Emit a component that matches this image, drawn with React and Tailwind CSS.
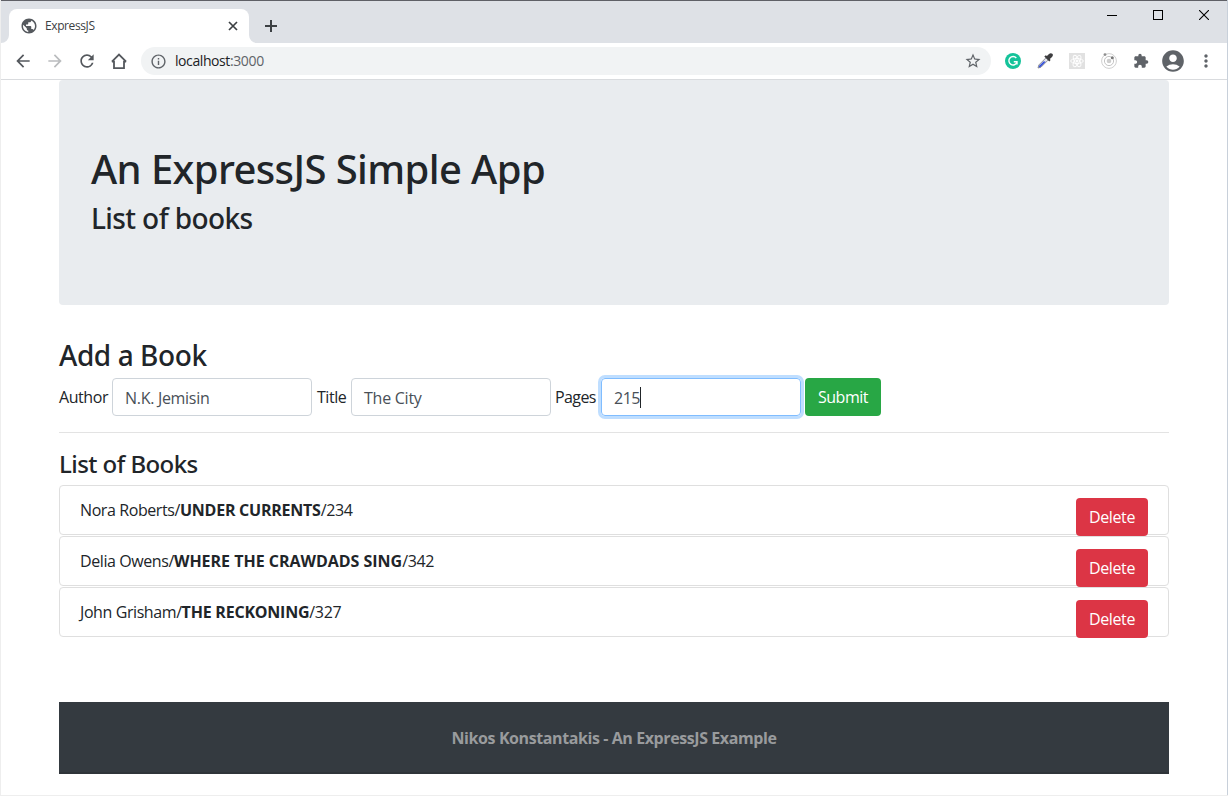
import {
  MdArrowBack,
  MdArrowForward,
  MdRefresh,
  MdInfoOutline,
  MdStarBorder,
  MdExtension,
  MdAccountCircle,
  MdMoreVert,
  MdPublic,
} from "react-icons/md";

const books = [
  { author: "Nora Roberts/", title: "UNDER CURRENTS", pages: "/234", t: "tracking-[-0.24px]" },
  { author: "Delia Owens/", title: "WHERE THE CRAWDADS SING", pages: "/342", t: "tracking-[-0.02px]" },
  { author: "John Grisham/", title: "THE RECKONING", pages: "/327", t: "tracking-[-0.22px]" },
];

function Slot({ children }) {
  return <div className="flex h-8 w-8 shrink-0 items-center justify-center">{children}</div>;
}

function TabStrip() {
  return (
    <div className="flex h-[43px] items-end border-t border-[#5f6066] bg-[#dee1e6]">
      <svg width="8" height="8" viewBox="0 0 8 8" className="shrink-0">
        <path d="M8 0v8H0a8 8 0 0 0 8-8z" fill="#fff" />
      </svg>
      <div className="flex h-[34px] w-[240px] shrink-0 items-center rounded-t-lg bg-white pl-[11px] pr-2">
        <MdPublic size={18} color="#55595e" className="shrink-0" />
        <span className="ml-[7px] flex-1 text-xs tracking-[-0.4px] text-[#3c4043]">ExpressJS</span>
        <div className="flex h-4 w-4 items-center justify-center">
          <svg width="10" height="10" viewBox="0 0 10 10" stroke="#3c4043" strokeWidth="1.7">
            <path d="M1 1l8 8M9 1l-8 8" />
          </svg>
        </div>
      </div>
      <svg width="8" height="8" viewBox="0 0 8 8" className="shrink-0">
        <path d="M0 0v8h8a8 8 0 0 1-8-8z" fill="#fff" />
      </svg>
      <div className="ml-1 flex h-[34px] w-5 items-center justify-center">
        <svg width="12" height="12" viewBox="0 0 12 12" stroke="#3c4043" strokeWidth="2">
          <path d="M6 0v12M0 6h12" />
        </svg>
      </div>
      <div className="ml-auto flex h-full items-start pt-[9px]">
        <svg width="10" height="10" viewBox="0 0 10 10" className="mr-[36px]">
          <path d="M0 5.5h10" stroke="#000" />
        </svg>
        <svg width="10" height="10" viewBox="0 0 10 10" className="mr-[36px]">
          <rect x="0.5" y="0.5" width="9" height="9" fill="none" stroke="#000" />
        </svg>
        <svg width="10" height="10" viewBox="0 0 10 10" className="mr-[18px]">
          <path d="M0 0l10 10M10 0L0 10" stroke="#000" strokeWidth="1.1" />
        </svg>
      </div>
    </div>
  );
}

function Toolbar() {
  return (
    <div className="flex h-[37px] items-center border-b border-[#d9dbde] bg-white pl-[6px] text-[#5f6368]">
      <Slot><MdArrowBack size={20} color="#54585d" /></Slot>
      <Slot><MdArrowForward size={20} color="#babcbe" /></Slot>
      <Slot><MdRefresh size={20} color="#54585d" /></Slot>
      <Slot>
        <svg width="16" height="16" viewBox="0 0 16 16" fill="none" stroke="#54585d" strokeWidth="1.8">
          <path d="M0.900 8.600L8 1.500l7.100 7.100M0.900 8.600H3v6.500h10V8.600h2.100" />
        </svg>
      </Slot>
      <div className="ml-[6px] flex h-7 w-[850px] shrink-0 items-center rounded-full bg-[#f1f3f4] pl-[9px] pr-[9px]">
        <MdInfoOutline size={17} />
        <span className="ml-2 text-sm leading-5 text-[#202124]">
          <span className="tracking-[-0.42px]">localhost</span>
          <span className="tracking-[-0.36px] text-[#5f6368]">:3000</span>
        </span>
        <MdStarBorder size={18} className="ml-auto" />
      </div>
      <div className="ml-[6px] flex">
        <Slot>
          <svg width="16" height="16" viewBox="0 0 16 16" fill="none">
            <circle cx="8" cy="8" r="8" fill="#15c39a" />
            <path d="M11.300 5A4.200 4.200 0 1 0 12 9.300M8.800 8.800H12v2.700" stroke="#fff" strokeWidth="1.400" />
          </svg>
        </Slot>
        <Slot>
          <svg width="16" height="16" viewBox="0 0 16 16">
            <path d="M9.200 4.600L1.800 12l-.8 3 3-.8 7.400-7.400z" fill="#e4e6ee" stroke="#777b84" strokeWidth=".8" />
            <path d="M6.800 8.200l-4.600 4.500-.5 1.700 1.800-.5 5.200-5.100z" fill="#3550d8" />
            <path d="M7.300 3.500l1.500-1.300 1.100.8L12 .9C13.200-.1 14.500 0 15.300.7s.9 2.200-.3 3.400l-2.100 2 .7 1-1.300 1.500z" fill="#3d3d3f" />
          </svg>
        </Slot>
        <Slot>
          <svg width="16" height="16" viewBox="0 0 16 16" fill="none" stroke="#fff" strokeWidth=".9">
            <rect width="16" height="16" fill="#e1e1e1" stroke="none" />
            <ellipse cx="8" cy="8" rx="6.300" ry="2.500" />
            <ellipse cx="8" cy="8" rx="6.300" ry="2.500" transform="rotate(60 8 8)" />
            <ellipse cx="8" cy="8" rx="6.300" ry="2.500" transform="rotate(120 8 8)" />
            <circle cx="8" cy="8" r="1.100" fill="#fff" />
          </svg>
        </Slot>
        <Slot>
          <svg width="16" height="16" viewBox="0 0 16 16" fill="none">
            <circle cx="8" cy="8" r="7.400" stroke="#cfcfcf" />
            <circle cx="8" cy="8" r="4.600" stroke="#c4c4c4" />
            <circle cx="8" cy="8" r="2.300" fill="#cdcdcd" />
            <circle cx="4" cy="1.600" r="1.400" fill="#8e8e8e" />
            <circle cx="11.300" cy="4.800" r="1.500" fill="#777" />
          </svg>
        </Slot>
        <Slot><MdExtension size={16} /></Slot>
        <Slot><MdAccountCircle size={26} className="shrink-0" /></Slot>
        <Slot><MdMoreVert size={20} className="ml-px" /></Slot>
      </div>
    </div>
  );
}

function Field({ label, value, width, ls, vls, focused }) {
  return (
    <>
      <label className={`${width} ${ls} shrink-0 whitespace-nowrap`}>{label}</label>
      <div
        className={`flex h-[38px] w-[200px] shrink-0 items-center rounded border px-3 pt-0.5 text-[#495057] ${vls} ${
          focused ? "border-[#80bdff] shadow-[0_0_0_3px_#bfdeff]" : "border-[#ced4da]"
        }`}
      >
        {value}
        {focused && <span className="-mt-0.5 h-[21px] w-px bg-[#212529]" />}
      </div>
    </>
  );
}

export default function App() {
  return (
    <div className="relative flex h-[796px] w-[1228px] flex-col overflow-hidden border-b border-l border-[#eeeeee] bg-white font-['Open_Sans',sans-serif] text-base leading-6 text-[#212529]">
      <div className="flex min-h-0 flex-1 flex-col border-r border-[#c8d0da]">
        <TabStrip />
        <Toolbar />
        <main className="ml-[58px] w-[1110px]">
          <section className="h-[225px] rounded bg-[#e9ecef] px-8 pt-16">
            <h1 className="mb-2 whitespace-nowrap font-['Noto_Sans',sans-serif] text-[40px] font-medium leading-[50px] tracking-[-0.6px]">
              An ExpressJS Simple App
            </h1>
            <h3 className="font-['Noto_Sans',sans-serif] text-[28px] font-medium leading-[33px] tracking-[-0.6px]">List of books</h3>
          </section>

          <h3 className="mt-8 font-['Noto_Sans',sans-serif] text-[28px] font-medium leading-[37px] tracking-[-0.42px]">Add a Book</h3>
          <form className="mt-1 flex items-center">
            <Field label="Author" value="N.K. Jemisin" width="w-[53px]" ls="tracking-[-0.43px]" vls="tracking-[-0.3px]" />
            <span className="w-[5px]" />
            <Field label="Title" value="The City" width="w-[34px]" ls="tracking-[-0.45px]" vls="tracking-[-0.25px]" />
            <span className="w-1" />
            <Field label="Pages" value="215" width="w-[46px]" ls="tracking-[-0.6px]" vls="tracking-[-0.5px]" focused />
            <button type="button" className="ml-1 h-[38px] w-[76px] rounded bg-[#28a745] tracking-[-0.45px] text-white">
              Submit
            </button>
          </form>
          <hr className="mt-4 border-[#e3e3e3]" />

          <h4 className="mt-4 font-['Noto_Sans',sans-serif] text-2xl font-medium leading-[30px] tracking-[-0.56px]">List of Books</h4>
          <ul className="mt-[6px] flex flex-col gap-px">
            {books.map((b) => (
              <li key={b.title} className="flex h-[50px] items-start justify-between rounded border border-[#dfdfdf] px-5 pt-3">
                <span className="whitespace-nowrap">
                  <span className="tracking-[-0.41px]">{b.author}</span>
                  <b className={`font-bold ${b.t}`}>{b.title}</b>
                  <span className="tracking-[-0.36px]">{b.pages}</span>
                </span>
                <button type="button" className="h-[38px] w-[72px] shrink-0 rounded bg-[#dc3545] tracking-[-0.38px] text-white">
                  Delete
                </button>
              </li>
            ))}
          </ul>

          <footer className="mt-[65px] flex h-[72px] items-center justify-center border-b-2 border-[#2f3439] bg-[#343a40] pt-0.5 font-bold tracking-[-0.41px] text-[#999b9d]">
            Nikos Konstantakis - An ExpressJS Example
          </footer>
        </main>
      </div>
      <svg className="absolute -left-px top-0" width="1" height="100" viewBox="0 0 1 100">
        <path d="M.5 13v1M.5 20v1M.5 32v1M.5 52v2M.5 57v6M.5 92v2" stroke="#4a4d52" />
        <path d="M.5 26v5" stroke="#9fb9d3" />
      </svg>
    </div>
  );
}
